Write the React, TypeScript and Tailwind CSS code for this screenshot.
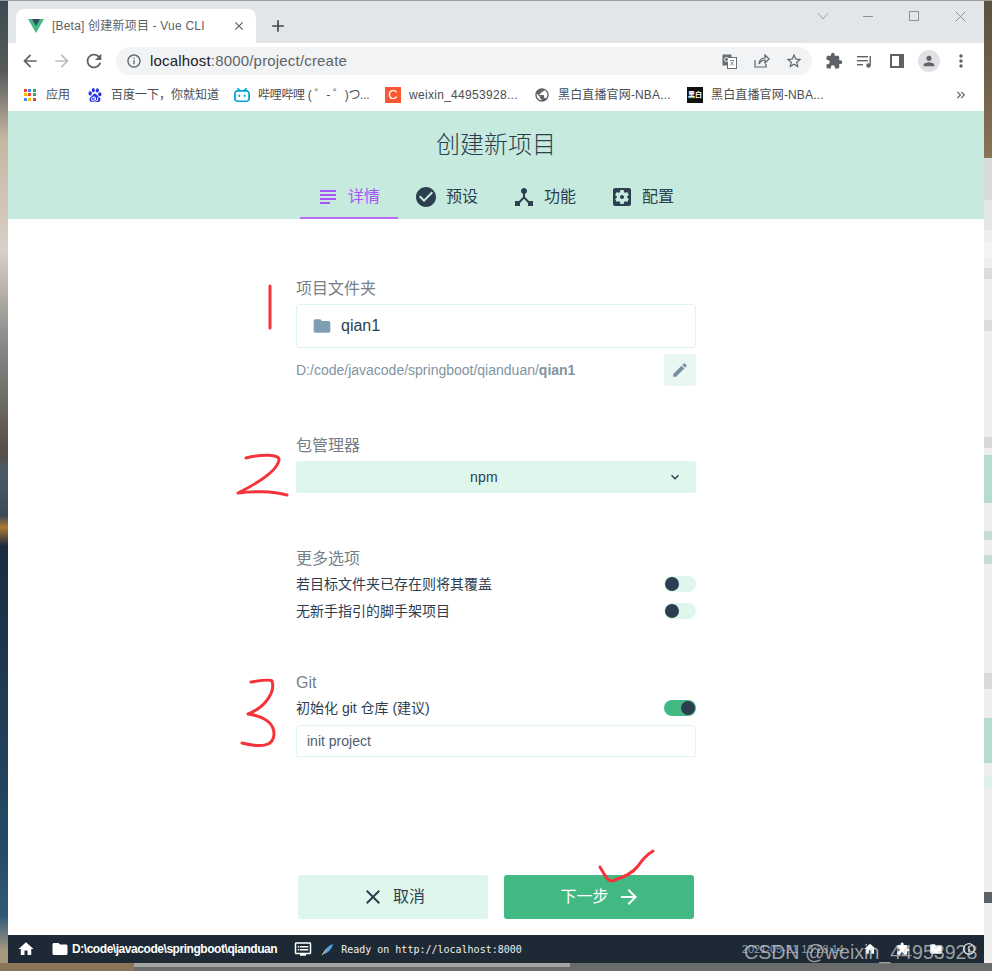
import React from "react";
import {
  MdAdd,
  MdArrowBack,
  MdArrowForward,
  MdCheckCircle,
  MdClose,
  MdDeviceHub,
  MdDvr,
  MdEdit,
  MdExpandMore,
  MdExtension,
  MdFolder,
  MdHome,
  MdInfoOutline,
  MdKeyboardDoubleArrowRight,
  MdMoreVert,
  MdPerson,
  MdPublic,
  MdRefresh,
  MdSettingsApplications,
  MdStarBorder,
  MdSubject,
} from "react-icons/md";
import { SiBaidu, SiBilibili } from "react-icons/si";

const font = "font-['Liberation_Sans','Noto_Sans_CJK_SC',sans-serif]";

const VueLogo = () => (
  <svg width="16" height="14" viewBox="0 0 16 14">
    <path d="M0 0 L8 14 L16 0 Z" fill="#42b983" />
    <path d="M4 0 L8 7 L12 0 Z" fill="#35495e" />
  </svg>
);

const AppsGrid = () => {
  const colors = ["#ea4335", "#4285f4", "#34a853", "#fbbc04", "#ea4335", "#34a853", "#4285f4", "#fbbc04", "#ea4335"];
  return (
    <div className="grid grid-cols-3 gap-[1px] w-[13px] h-[13px]">
      {colors.map((c, i) => (
        <span key={i} className="w-[3px] h-[3px]" style={{ background: c }} />
      ))}
    </div>
  );
};

const Bookmark = ({
  icon,
  label,
  className,
  labelClass,
}: {
  icon: React.ReactNode;
  label: string;
  className: string;
  labelClass?: string;
}) => (
  <div className={`flex items-center shrink-0 ${className}`}>
    <span className="w-4 h-4 flex items-center justify-center shrink-0">{icon}</span>
    <span className={`ml-[8px] text-[12px] text-[#4a4d51] whitespace-nowrap ${labelClass ?? ""}`}>{label}</span>
  </div>
);

const BrowserChrome = () => (
  <div className={`${font} shrink-0`}>
    {/* tab strip */}
    <div className="h-[42px] bg-[#e3e6e9] flex items-end pl-2">
      <div className="w-[240px] h-[34px] bg-white rounded-t-lg flex items-center pl-[12px] pr-[10px]">
        <VueLogo />
        <span className="ml-[8px] text-[12px] tracking-[0.2px] text-[#5f6368] whitespace-nowrap flex-1">
          [Beta] 创建新项目 - Vue CLI
        </span>
        <MdClose className="text-[#5f6368] w-[14px] h-[14px]" />
      </div>
      <MdAdd className="ml-[12px] mb-[7px] w-[20px] h-[20px] text-[#45494d]" />
      <div className="ml-auto flex items-center h-[30px] self-start text-[#9ea2a6]">
        <svg width="12" height="8" viewBox="0 0 12 8" className="mr-[34px]">
          <path d="M1 1 L6 7 L11 1" fill="none" stroke="currentColor" />
        </svg>
        <span className="w-[10px] h-[1px] bg-[#8f9397] mr-[36px]" />
        <span className="w-[10px] h-[10px] border border-[#8f9397] mr-[36px]" />
        <svg width="11" height="11" viewBox="0 0 11 11" className="mr-[18px]">
          <path d="M0.5 0.5 L10.5 10.5 M10.5 0.5 L0.5 10.5" stroke="#8f9397" />
        </svg>
      </div>
    </div>
    {/* toolbar */}
    <div className="h-[36px] bg-white flex items-center pl-[12px] pr-[11px]">
      <MdArrowBack className="w-[20px] h-[20px] text-[#5f6368]" />
      <MdArrowForward className="w-[20px] h-[20px] text-[#bcbfc2] ml-[12px]" />
      <MdRefresh className="w-[22px] h-[22px] text-[#5f6368] ml-[11px]" />
      <div className="ml-[11px] w-[696px] h-7 rounded-full bg-[#f1f3f4] flex items-center pl-[10px] pr-[9px]">
        <MdInfoOutline className="w-[16px] h-[16px] text-[#5f6368]" />
        <span className="ml-[8px] text-[15px] tracking-[0.18px] text-[#5f6368]">
          <span className="text-[#202124]">localhost</span>:8000/project/create
        </span>
        <div className="ml-auto flex items-center text-[#5f6368]">
          <svg width="15" height="15" viewBox="0 0 15 15">
            <rect x="0.5" y="0.5" width="9" height="11" fill="#6b6e72" />
            <rect x="5.5" y="3.5" width="9" height="11" fill="#fff" stroke="#6b6e72" />
            <path d="M8 6.5 H12 M10 6 V7 M8.5 11.5 L11.5 7.5 M9 8 L12 11.5" stroke="#6b6e72" strokeWidth="0.8" />
            <circle cx="4.5" cy="5.5" r="2" fill="none" stroke="#fff" strokeWidth="0.9" />
          </svg>
          <svg width="16" height="14" viewBox="0 0 16 14" fill="none" stroke="currentColor" strokeWidth="1.2" className="ml-[17px]">
            <path d="M1 6 V13 H12 V10" />
            <path d="M5 10 C5 6 8 4 11 4 V1 L15 5 L11 9 V6 C8 6 6 8 5 10 Z" />
          </svg>
          <MdStarBorder className="w-[18px] h-[18px] ml-[15px]" />
        </div>
      </div>
      <div className="ml-[13px] flex items-center text-[#5f6368] flex-1">
        <MdExtension className="w-[18px] h-[18px]" />
        <svg width="16" height="13" viewBox="0 0 16 13" className="ml-[14px]" fill="#5f6368">
          <rect x="0" y="1" width="11" height="1.4" />
          <rect x="0" y="5" width="11" height="1.4" />
          <rect x="0" y="9" width="6" height="1.4" />
          <rect x="12.5" y="1" width="1.4" height="9" />
          <circle cx="11.5" cy="10.5" r="2.2" />
        </svg>
        <span className="ml-[17px] w-[14px] h-[14px] border-[2px] border-r-[5px] border-[#5f6368] bg-white" />
        <span className="ml-[14px] w-[22px] h-[22px] rounded-full bg-[#dfe1e5] flex items-center justify-center">
          <MdPerson className="w-[16px] h-[16px]" />
        </span>
        <MdMoreVert className="ml-[11px] w-[20px] h-[20px]" />
      </div>
    </div>
    {/* bookmarks */}
    <div className="h-[32px] bg-white flex items-center pl-[14px] pr-[16px]">
      <Bookmark className="w-[65px]" icon={<AppsGrid />} label="应用" />
      <Bookmark className="w-[147px]" icon={<SiBaidu className="w-[14px] h-[14px] text-[#2932e1]" />} label="百度一下，你就知道" />
      <Bookmark
        className="w-[151px]"
        labelClass="tracking-[-0.3px]"
        icon={<SiBilibili className="w-[16px] h-[16px] text-[#00a1d6]" />}
        label="哔哩哔哩 ( ゜- ゜)つ..."
      />
      <Bookmark
        className="w-[149px]"
        labelClass="tracking-[0.3px]"
        icon={<span className="w-4 h-4 bg-[#fc5531] text-white text-[13px] leading-4 text-center">C</span>}
        label="weixin_44953928..."
      />
      <Bookmark
        className="w-[153px]"
        labelClass="tracking-[0.15px]"
        icon={<MdPublic className="w-4 h-4 text-[#5f6368]" />}
        label="黑白直播官网-NBA..."
      />
      <Bookmark
        className="w-[150px]"
        labelClass="tracking-[0.15px]"
        icon={<span className="w-4 h-4 bg-[#111] text-white text-[7px] leading-4 text-center font-bold">黑白</span>}
        label="黑白直播官网-NBA..."
      />
      <MdKeyboardDoubleArrowRight className="ml-auto w-[14px] h-[14px] text-[#5f6368]" />
    </div>
  </div>
);

const Tab = ({ icon, label, active }: { icon: React.ReactNode; label: string; active?: boolean }) => (
  <div
    className={`w-[98px] h-[43px] flex items-center pl-4 gap-2 border-b-2 ${
      active ? "border-[#b76bf2] text-[#a855f7]" : "border-transparent text-[#2c3e50]"
    }`}
  >
    {icon}
    <span className="text-[16px]">{label}</span>
  </div>
);

const Toggle = ({ on }: { on?: boolean }) => (
  <span className={`w-8 h-4 rounded-full flex items-center shrink-0 ${on ? "bg-[#42b983] justify-end" : "bg-[#dff6ec]"}`}>
    <span className="w-[14px] h-[14px] rounded-full bg-[#2c3e50] mx-[1px]" />
  </span>
);

const OptionRow = ({ label, on, className }: { label: string; on?: boolean; className?: string }) => (
  <div className={`flex items-center justify-between h-4 text-[14px] text-[#2c3e50] ${className ?? ""}`}>
    <span>{label}</span>
    <Toggle on={on} />
  </div>
);

const SectionLabel = ({ children, className }: { children: React.ReactNode; className?: string }) => (
  <div className={`text-[16px] leading-[20px] text-[#757f8a] ${className ?? ""}`}>{children}</div>
);

const ProjectPage = () => (
  <div className={`${font} flex-1 flex flex-col bg-white`}>
    <div className="h-[108px] bg-[#c6eadd] flex flex-col items-center">
      <h1 className="mt-[18px] h-[32px] text-[24px] leading-[32px] font-light text-[#2c3e50]">创建新项目</h1>
      <div className="mt-[15px] flex">
        <Tab active icon={<MdSubject className="w-[24px] h-[24px]" />} label="详情" />
        <Tab icon={<MdCheckCircle className="w-[24px] h-[24px]" />} label="预设" />
        <Tab icon={<MdDeviceHub className="w-[24px] h-[24px]" />} label="功能" />
        <Tab icon={<MdSettingsApplications className="w-[24px] h-[24px]" />} label="配置" />
      </div>
    </div>

    <div className="w-[400px] ml-[288px] flex flex-col flex-1">
      <SectionLabel className="mt-[60px]">项目文件夹</SectionLabel>
      <div className="mt-[5px] h-[44px] rounded-[3px] border border-[#dff6ec] flex items-center pl-[15px]">
        <MdFolder className="w-[20px] h-[20px] text-[#7f9eb2]" />
        <span className="ml-[9px] text-[16px] text-[#2c3e50]">qian1</span>
      </div>
      <div className="mt-[6px] flex items-center justify-between">
        <span className="text-[14px] text-[#8194a3]">
          D:/code/javacode/springboot/qianduan/<b>qian1</b>
        </span>
        <span className="w-8 h-8 rounded-[3px] bg-[#e8f7f1] flex items-center justify-center">
          <MdEdit className="w-[18px] h-[18px] text-[#76909f]" />
        </span>
      </div>

      <SectionLabel className="mt-[50px]">包管理器</SectionLabel>
      <div className="mt-[5px] h-8 rounded-[3px] bg-[#dff6ec] flex items-center pr-[13px]">
        <span className="flex-1 text-center text-[14px] tracking-[0.2px] text-[#2c3e50] pl-[5px]">npm</span>
        <MdExpandMore className="w-[16px] h-[16px] text-[#2c3e50]" />
      </div>

      <SectionLabel className="mt-[56px]">更多选项</SectionLabel>
      <OptionRow className="mt-[7px]" label="若目标文件夹已存在则将其覆盖" />
      <OptionRow className="mt-[11px]" label="无新手指引的脚手架项目" />

      <SectionLabel className="mt-[54px]">Git</SectionLabel>
      <OptionRow className="mt-[7px]" label="初始化 git 仓库 (建议)" on />
      <div className="mt-[9px] h-8 rounded-[3px] border border-[#dff6ec] flex items-center pl-[10px] text-[14px] text-[#4d5d6d]">
        init project
      </div>
    </div>

    <div className="flex justify-center gap-4 mb-4">
      <button className="w-[190px] h-[44px] rounded-[3px] bg-[#dff6ec] text-[#2c3e50] flex items-center justify-center gap-2 text-[16px]">
        <MdClose className="w-[24px] h-[24px]" />
        取消
      </button>
      <button className="w-[190px] h-[44px] rounded-[3px] bg-[#42b983] text-white flex items-center justify-center gap-2 pl-[3px] text-[16px]">
        下一步
        <MdArrowForward className="w-[24px] h-[24px]" />
      </button>
    </div>

    {/* status bar */}
    <div className="h-[28px] bg-[#1d2935] flex items-center pl-[9px] text-white text-[12px] shrink-0">
      <MdHome className="w-[18px] h-[18px]" />
      <MdFolder className="ml-[16px] w-[18px] h-[18px]" />
      <span className="ml-[3px] font-bold tracking-[-0.45px]">D:\code\javacode\springboot\qianduan</span>
      <MdDvr className="ml-[17px] w-[18px] h-[18px]" />
      <svg width="13" height="13" viewBox="0 0 13 13" className="ml-[9px]">
        <path d="M1 12 C3 7 7 3 12 1 C11 6 7 10 3 11 Z" fill="#4aa3ea" />
        <path d="M1 12 L6 6" stroke="#f2c94c" />
      </svg>
      <span className="ml-[7px] font-['DejaVu_Sans_Mono',monospace] text-[10px] text-[#f0f0f0]">
        Ready on http://localhost:8000
      </span>
      <span className="ml-auto mr-[8px] flex items-center gap-[19px] text-[11px] text-[#8d98a3]">
        <span>2021-05-21 13:28:14</span>
        <MdHome className="w-[14px] h-[14px] text-white" />
        <MdExtension className="w-[14px] h-[14px] text-white" />
        <MdFolder className="w-[14px] h-[14px] text-white" />
        <MdInfoOutline className="w-[14px] h-[14px] text-white" />
      </span>
    </div>
  </div>
);

export default function App() {
  return (
    <div className="relative w-[992px] h-[971px] overflow-hidden bg-[#6a6b6b]">
      <div className="h-[963px] flex pt-[1px] bg-[#9a9c9d]">
        {/* desktop wallpaper peeking at the left edge */}
        <div className="w-2 bg-[linear-gradient(180deg,#3c4a50_0px,#56595a_70px,#c5b5a0_136px,#d9d0c8_250px,#8a8a88_340px,#555045_452px,#4a5a68_470px,#3c4a58_515px,#b07830_526px,#1a2c40_545px,#254a66_850px,#2f5a78_915px,#a89880_950px)]" />
        <div className="w-[976px] flex flex-col">
          <BrowserChrome />
          <ProjectPage />
        </div>
        {/* other window behind, right edge */}
        <div className="w-2 bg-[#eeeeee] flex flex-col">
          <div className="h-[157px] bg-[linear-gradient(180deg,#59503f,#8a7356)]" />
          <div className="h-[42px] bg-[#d8dadb]" />
          <div className="h-[30px] bg-[#e4e5e5]" />
          <div className="h-[12px]" />
          <div className="h-[16px] bg-[#f4f4f4]" />
          <div className="h-[10px]" />
          <div className="h-[11px] bg-[#dcdcdc]" />
          <div className="h-[41px]" />
          <div className="h-[11px] bg-[#dcdcdc]" />
          <div className="h-[106px]" />
          <div className="h-[11px] bg-[#d6d8d8]" />
          <div className="h-[7px]" />
          <div className="h-[48px] bg-[#b5dccd]" />
          <div className="h-[28px]" />
          <div className="h-[9px] bg-[#c5dcd3]" />
          <div className="h-[15px]" />
          <div className="h-[9px] bg-[#c5dcd3]" />
          <div className="h-[109px]" />
          <div className="h-[16px] bg-[#d8dadb]" />
          <div className="h-[29px]" />
          <div className="h-[45px] bg-[#b5dccd]" />
          <div className="h-[13px]" />
          <div className="h-[13px] bg-[#dff0e9]" />
          <div className="h-[103px]" />
          <div className="h-[11px] bg-[#5d6268]" />
        </div>
      </div>
      <div className="h-2 flex">
        <div className="w-[134px] bg-[#8a7558]" />
        <div className="w-[436px] h-[4px] bg-[#a4a4a4]" />
      </div>

      {/* red pen annotations */}
      <svg className="absolute inset-0 pointer-events-none" width="992" height="971" fill="none" stroke="#f4333a" strokeWidth="3" strokeLinecap="round" strokeLinejoin="round">
        <path d="M270 286 L270 328" />
        <path d="M246 458 C262 454 280 454 279 460 C277 472 256 484 238 493 C252 491 272 491 287 495" />
        <path d="M251 682 C258 681 270 679 272 681 C275 690 268 706 248 714 C262 716 274 722 274 734 C274 746 262 748 242 743" />
        <path d="M600 867 C604 874 608 882 612 881 C622 878 632 874 638 866 C642 860 648 854 653 851" />
      </svg>

      {/* CSDN watermark */}
      <span className="absolute left-[744px] top-[940px] text-[19.6px] leading-[24px] text-[#d6d6d6]/70 font-['Liberation_Sans',sans-serif] whitespace-nowrap">
        CSDN @weixin_44953928
      </span>
    </div>
  );
}
